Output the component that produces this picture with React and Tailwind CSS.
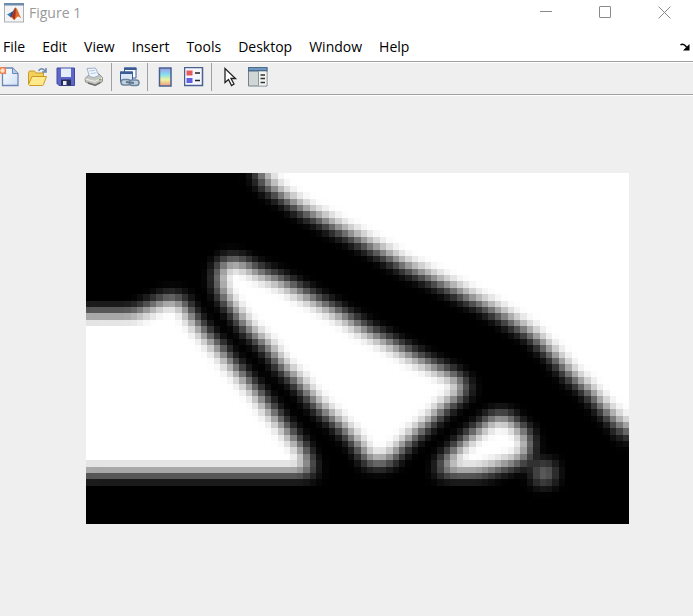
import React from "react";

const COLS = 85;
const ROWS = 55;
const RADIUS = 3;

// Void regions of the cantilever, in a 543 x 351 drawing space.
const VOIDS = [
  [[165, -6], [171, 2], [179, 10], [195, 22], [216, 36], [251, 55], [287, 74], [319, 93], [358, 112], [370, 118], [383, 125], [396, 131], [409, 138], [428, 150], [439, 157], [449, 164], [466, 182], [484, 201], [504, 220], [516, 233], [533, 252], [545, 268], [570, 268], [570, -6]],
  [[136, 90], [143, 87], [155, 89], [175, 100], [194, 107], [217, 120], [250, 138], [281, 157], [307, 171], [326, 182], [352, 195], [366, 202], [381, 212], [379, 219], [358, 234], [345, 247], [318, 273], [302, 289], [282, 289], [274, 274], [255, 253], [232, 233], [211, 208], [198, 196], [179, 171], [162, 157], [148, 138], [134, 118], [131, 104]],
  [[-10, 141], [46, 141], [64, 134], [80, 126], [94, 126], [102, 138], [111, 151], [129, 170], [152, 198], [166, 213], [173, 221], [185, 237], [204, 260], [217, 276], [227, 299], [-10, 299]],
  [[409, 243], [422, 243], [430, 252], [441, 260], [444, 270], [440, 286], [425, 291], [398, 299], [353, 300], [358, 288], [370, 276], [386, 261]],
  [[450, 298], [454, 293], [461, 292], [466, 299], [465, 305], [458, 308], [452, 306]],
];

function inside(poly, x, y) {
  let hit = false;
  for (let i = 0, j = poly.length - 1; i < poly.length; j = i++) {
    const [xi, yi] = poly[i];
    const [xj, yj] = poly[j];
    if (yi > y !== yj > y && x < ((xj - xi) * (y - yi)) / (yj - yi) + xi) hit = !hit;
  }
  return hit;
}

// Coverage of each element, smoothed with a cone filter.
function densityField() {
  const raw = [];
  for (let r = 0; r < ROWS; r++) {
    for (let c = 0; c < COLS; c++) {
      let n = 0;
      for (let a = 0; a < 3; a++) {
        for (let b = 0; b < 3; b++) {
          const x = ((c + (a + 0.5) / 3) * 543) / COLS;
          const y = ((r + (b + 0.5) / 3) * 351) / ROWS;
          if (VOIDS.some((p) => inside(p, x, y))) n++;
        }
      }
      raw.push(n / 9);
    }
  }
  const out = [];
  for (let r = 0; r < ROWS; r++) {
    const row = [];
    for (let c = 0; c < COLS; c++) {
      let sum = 0;
      let weight = 0;
      for (let y = Math.max(0, r - 2); y <= Math.min(ROWS - 1, r + 2); y++) {
        for (let x = Math.max(0, c - 2); x <= Math.min(COLS - 1, c + 2); x++) {
          const w = Math.max(0, RADIUS - Math.hypot(x - c, y - r));
          sum += w * raw[y * COLS + x];
          weight += w;
        }
      }
      row.push(Math.round((255 * sum) / weight));
    }
    out.push(row);
  }
  return out;
}

function runs(row) {
  const list = [];
  row.forEach((v, c) => {
    const last = list[list.length - 1];
    if (last && last.v === v) last.n++;
    else list.push({ v, c, n: 1 });
  });
  return list;
}

const FIELD = densityField().map(runs);

function DensityPlot() {
  return (
    <svg viewBox="0 0 85 55" preserveAspectRatio="none" shapeRendering="crispEdges" className="block aspect-[543/351] w-full bg-black" role="img" aria-label="Density plot">
      {FIELD.map((row, r) =>
        row.map(({ v, c, n }) => <rect key={`${r}-${c}`} x={c} y={r} width={n} height="1" fill={`rgb(${v},${v},${v})`} />)
      )}
    </svg>
  );
}

function MatlabLogo() {
  return (
    <svg viewBox="0 0 20 20" className="size-5 shrink-0" aria-hidden="true">
      <rect x=".5" y=".5" width="19" height="18.5" fill="#f4f4f4" stroke="#a9b0b8" />
      <path d="M0 0h20v2.500H0z" fill="#6d8cad" />
      <path d="M3 11.5 7.500 9l2 2-2.500 3.500Z" fill="#3d7fc0" />
      <path d="M7.500 9c2 0 2.300-3.500 4-4.500L9.500 12 7 14.500l-1-1.500Z" fill="#3a4a78" />
      <path d="M11.500 4.500C9.500 7 9.500 12 7 14.500c1.500 0 2 2.500 3.300 2.500 1.700-1 2.200-3.500 3.700-3.500 1.300 0 2.200 1 3.500 2-2.500-3.500-3.500-9.500-6-11Z" fill="#e06a24" />
      <path d="M11.500 4.500c-1.500 2-1.500 6-3.500 9 1 .5 1.500 2 2.300 3.500 1.200-3.500 1.700-8 1.200-12.500Z" fill="#a5301c" />
    </svg>
  );
}

function NewIcon() {
  return (
    <svg viewBox="0 0 20 20" className="size-5" aria-hidden="true">
      <defs>
        <linearGradient id="page" x1="0" y1="0" x2="1" y2="1">
          <stop offset="0" stopColor="#fff" />
          <stop offset="1" stopColor="#cfe0f5" />
        </linearGradient>
      </defs>
      <path d="M2.500 1h10l5.500 5.500v12H2.500z" fill="url(#page)" stroke="#6a87b5" strokeWidth="1.300" />
      <path d="M12.500 1v5.500H18" fill="#b9cde9" stroke="#6a87b5" />
      <circle cx="2.500" cy="3.500" r="3" fill="#ffe3c0" stroke="#e8815c" strokeWidth="1.500" />
      <path d="M-1 0l2 2M6 0 4.500 1.500M6 7 4.500 5.500" stroke="#e8815c" strokeWidth="1.500" />
    </svg>
  );
}

function OpenIcon() {
  return (
    <svg viewBox="0 0 20 20" className="size-5" aria-hidden="true">
      <path d="M.5 17V5.500l1-1.500h5L8 6h7.500v4" fill="#f3cf5b" stroke="#c99a26" />
      <path d="M.5 17.500 4 9.500h14.500l-3 8c0 .7-.5 1-1 1h-13Z" fill="#ffe98a" stroke="#c99a26" />
      <path d="M10.500 4c1.500-3 5-3 6.500 0M18 1v4h-4" fill="none" stroke="#6b87ab" strokeWidth="1.500" />
    </svg>
  );
}

function SaveIcon() {
  return (
    <svg viewBox="0 0 20 20" className="size-5" aria-hidden="true">
      <path d="M1 1h17.500v17.500H3l-2-2z" fill="#5c68cc" stroke="#4049a0" />
      <path d="M5 1.500h10v8.500H5z" fill="#e4edfa" />
      <path d="M5 12.500h10v6H5z" fill="#282d55" />
      <path d="M7 14h3.500v4H7z" fill="#e8ebf8" />
    </svg>
  );
}

function PrintIcon() {
  return (
    <svg viewBox="0 0 20 20" className="size-5" aria-hidden="true">
      <path d="m1 11.500 4.500-4 9-1 4 4v4l-7 4-10-3.500z" fill="#c4c4c0" stroke="#92928e" />
      <path d="m5.500 9.500-2.500-8 8.500-.5 3.500 7.500-5 2z" fill="#eff5fc" stroke="#9fb0c6" />
      <path d="m5.500 4 5.500-.7M6.500 6.500l6-.7" stroke="#b3c8e2" />
      <path d="m1.500 12 9.500 2.500 7-3.500" fill="none" stroke="#f2f2f2" />
      <path d="m4 16 7 2.300 5.500-3" fill="none" stroke="#6a6a6a" strokeWidth="1.500" />
      <path d="M15 12.500h2" stroke="#75a658" strokeWidth="1.500" />
    </svg>
  );
}

function LinkIcon() {
  return (
    <svg viewBox="0 0 20 20" className="size-5" aria-hidden="true">
      <path d="M4.500 1h11.500v10H4.500z" fill="#fff" stroke="#3b5d97" />
      <path d="M4 .5h12.500V3H4z" fill="#3b5d97" />
      <path d="M.5 5h12v10H.5z" fill="#dbe7f8" stroke="#3b5d97" />
      <path d="M0 4.500h13V7H0z" fill="#3b5d97" />
      <rect x="1" y="12.500" width="9.500" height="5.500" rx="2.750" fill="#c3d1df" stroke="#6c859d" strokeWidth="1.500" />
      <rect x="9.500" y="13" width="9.500" height="5.500" rx="2.750" fill="#c3d1df" stroke="#6c859d" strokeWidth="1.500" />
      <path d="m6 15 8 1" stroke="#5f7890" strokeWidth="2" />
    </svg>
  );
}

function ColorbarIcon() {
  return (
    <svg viewBox="0 0 20 20" className="size-5" aria-hidden="true">
      <defs>
        <linearGradient id="bar" x1="0" y1="0" x2="0" y2="1">
          <stop offset="0" stopColor="#a598e6" />
          <stop offset=".35" stopColor="#83dcf0" />
          <stop offset=".65" stopColor="#eef3a0" />
          <stop offset="1" stopColor="#f19a80" />
        </linearGradient>
      </defs>
      <path d="M3.500 1h11.500v18H3.500z" fill="url(#bar)" stroke="#4a6190" strokeWidth="1.500" />
    </svg>
  );
}

function LegendIcon() {
  return (
    <svg viewBox="0 0 20 20" className="size-5" aria-hidden="true">
      <path d="M.5.500h18v18H.5z" fill="#f4f7ff" stroke="#4a6190" strokeWidth="1.500" />
      <path d="M2.500 3.500h6v5h-6z" fill="#e85b5b" />
      <path d="M2.500 11h6v5h-6z" fill="#625fe0" />
      <path d="M11 6h5M11 13.500h5" stroke="#222" strokeWidth="1.500" />
    </svg>
  );
}

function PointerIcon() {
  return (
    <svg viewBox="0 0 20 20" className="size-5" aria-hidden="true">
      <path d="M5 1.500v14l3.500-3 3 6 2.500-1.500-3-5.500h4.500z" fill="#fff" stroke="#222" strokeWidth="1.300" />
    </svg>
  );
}

function InspectorIcon() {
  return (
    <svg viewBox="0 0 20 20" className="size-5" aria-hidden="true">
      <path d="M.5.500h18.500v18.500H.5z" fill="#d0d6d6" stroke="#75808a" />
      <path d="M0 0h19.500v4.500H0z" fill="#4b6c8e" />
      <path d="M1 1h17.500v2H1z" fill="#7398bd" />
      <path d="M11 4.500h7.500v14H11z" fill="#f4f4f0" />
      <path d="M10.500 4.500v14" stroke="#8a959c" />
      <path d="M12.500 8H17M12.500 11.500H17M12.500 15.500H17" stroke="#333" strokeWidth="1.500" />
    </svg>
  );
}

function ToolButton({ label, children }) {
  return (
    <button type="button" aria-label={label} className="shrink-0">
      {children}
    </button>
  );
}

function Separator() {
  return <span className="-ml-px h-7 w-px shrink-0 bg-[#a0a0a0]" />;
}

const MENUS = ["File", "Edit", "View", "Insert", "Tools", "Desktop", "Window", "Help"];

export default function App() {
  return (
    <div className="min-h-screen bg-[#efefef] font-['Open_Sans','Noto_Sans',sans-serif] text-sm text-black">
      <header className="flex h-8 items-start bg-white pl-1">
        <div className="flex flex-1 items-center gap-[5px] pt-[3px]">
          <MatlabLogo />
          <h1 className="text-[#999]">Figure 1</h1>
        </div>
        <div className="flex gap-[46px] pt-1.5 pr-[22px]">
          <button type="button" aria-label="Minimize">
            <svg viewBox="0 0 13 13" className="size-[13px]"><path d="M0 5.500h12" stroke="#8a8a8a" /></svg>
          </button>
          <button type="button" aria-label="Maximize">
            <svg viewBox="0 0 13 13" className="size-[13px]"><rect x=".5" y=".5" width="11" height="11" rx=".5" fill="none" stroke="#8a8a8a" /></svg>
          </button>
          <button type="button" aria-label="Close">
            <svg viewBox="0 0 13 13" className="size-[13px]"><path d="m.5.500 12 12m0-12-12 12" stroke="#8a8a8a" /></svg>
          </button>
        </div>
      </header>
      <nav className="flex h-[29px] items-center bg-white pr-[3px] pl-[3px]">
        <div className="flex flex-1 gap-[17px]">
          {MENUS.map((name) => (
            <button key={name} type="button">{name}</button>
          ))}
        </div>
        <button type="button" aria-label="Dock figure">
          <svg viewBox="0 0 10 8" className="h-2 w-2.5"><path d="M.5 2c2-1.500 4-.5 6 2" fill="none" stroke="#000" strokeWidth="1.500" /><path d="M9.500 1v6.500H3z" fill="#000" /></svg>
        </button>
      </nav>
      <div role="toolbar" className="flex h-[34px] items-center gap-2 border-y border-[#a0a0a0] bg-[#efefef] pb-0.5 shadow-[0_1px_0_white,inset_0_1px_0_white]">
        <ToolButton label="New figure"><NewIcon /></ToolButton>
        <ToolButton label="Open file"><OpenIcon /></ToolButton>
        <ToolButton label="Save figure"><SaveIcon /></ToolButton>
        <ToolButton label="Print figure"><PrintIcon /></ToolButton>
        <Separator />
        <ToolButton label="Link plot"><LinkIcon /></ToolButton>
        <Separator />
        <ToolButton label="Insert colorbar"><ColorbarIcon /></ToolButton>
        <ToolButton label="Insert legend"><LegendIcon /></ToolButton>
        <Separator />
        <ToolButton label="Edit plot"><PointerIcon /></ToolButton>
        <ToolButton label="Open property inspector"><InspectorIcon /></ToolButton>
      </div>
      <main className="pt-[78px] pr-16 pb-20 pl-[86px]">
        <DensityPlot />
      </main>
    </div>
  );
}
